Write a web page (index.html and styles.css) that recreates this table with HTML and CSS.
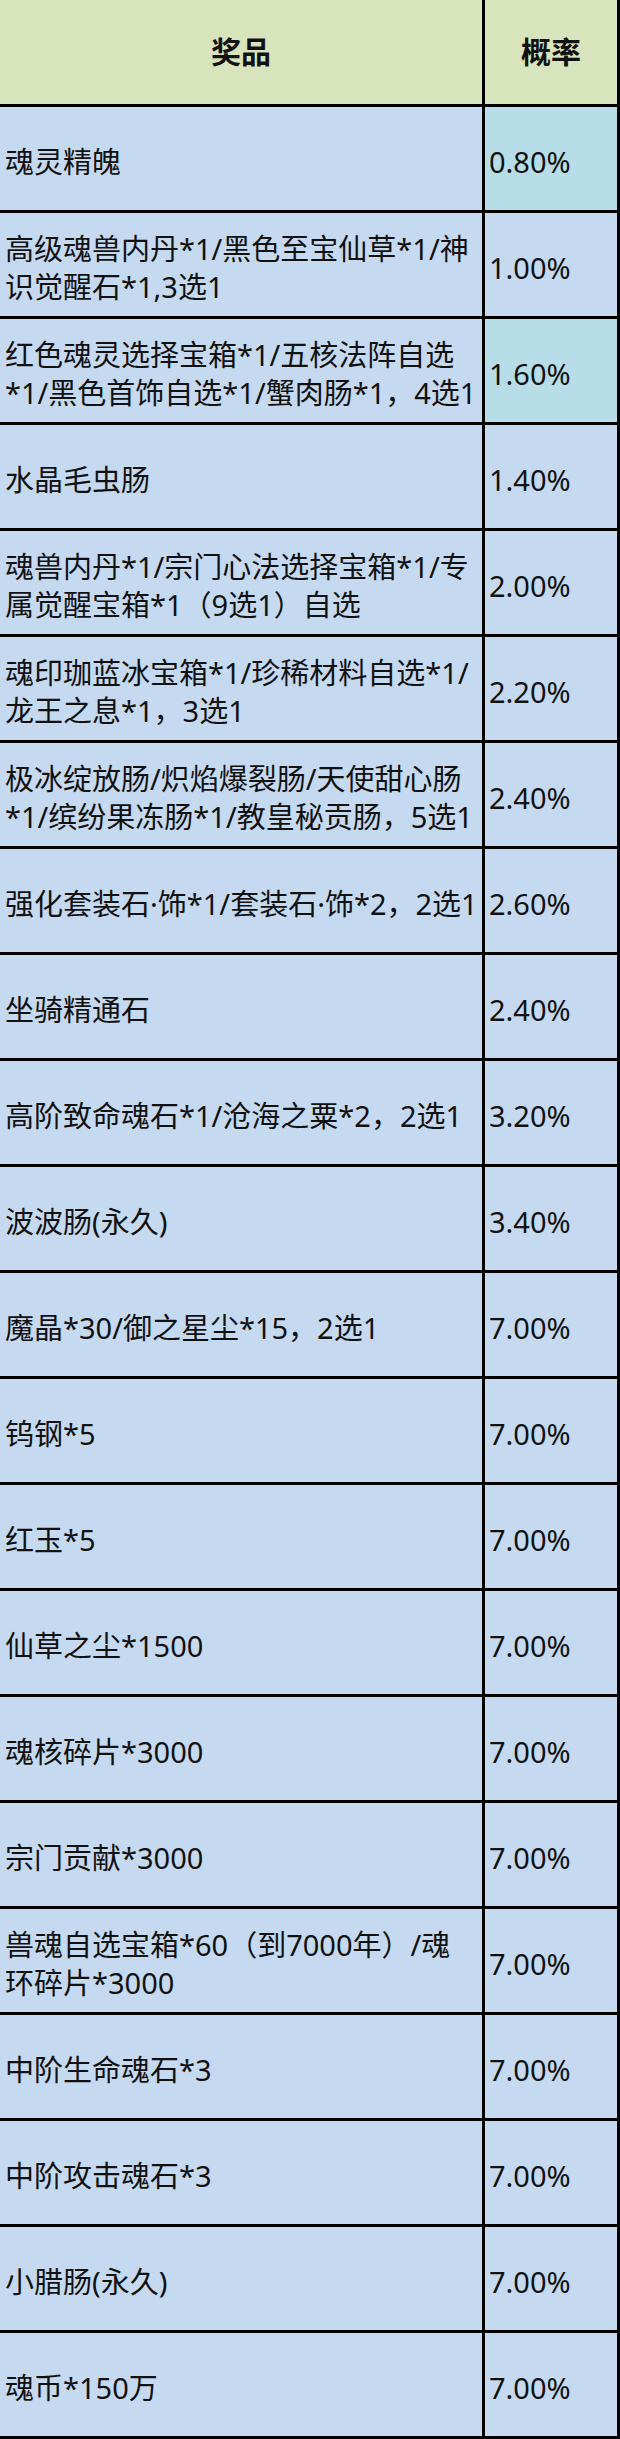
FILE: index.html
```html
<!DOCTYPE html>
<html lang="zh-CN">
<head>
<meta charset="utf-8">
<title>奖品概率</title>
<link rel="stylesheet" href="styles.css">
</head>
<body>
<div class="sheet">
  <div class="row head"><div class="cell name">奖品</div><div class="cell rate">概率</div></div>
  <div class="row"><div class="cell name">魂灵精魄</div><div class="cell rate hl">0.80%</div></div>
  <div class="row"><div class="cell name">高级魂兽内丹*1/黑色至宝仙草*1/神<br>识觉醒石*1,3选1</div><div class="cell rate">1.00%</div></div>
  <div class="row"><div class="cell name">红色魂灵选择宝箱*1/五核法阵自选<br>*1/黑色首饰自选*1/蟹肉肠*1，4选1</div><div class="cell rate hl">1.60%</div></div>
  <div class="row"><div class="cell name">水晶毛虫肠</div><div class="cell rate">1.40%</div></div>
  <div class="row"><div class="cell name">魂兽内丹*1/宗门心法选择宝箱*1/专<br>属觉醒宝箱*1（9选1）自选</div><div class="cell rate">2.00%</div></div>
  <div class="row"><div class="cell name">魂印珈蓝冰宝箱*1/珍稀材料自选*1/<br>龙王之息*1，3选1</div><div class="cell rate">2.20%</div></div>
  <div class="row"><div class="cell name">极冰绽放肠/炽焰爆裂肠/天使甜心肠<br>*1/缤纷果冻肠*1/教皇秘贡肠，5选1</div><div class="cell rate">2.40%</div></div>
  <div class="row"><div class="cell name">强化套装石·饰*1/套装石·饰*2，2选1</div><div class="cell rate">2.60%</div></div>
  <div class="row"><div class="cell name">坐骑精通石</div><div class="cell rate">2.40%</div></div>
  <div class="row"><div class="cell name">高阶致命魂石*1/沧海之粟*2，2选1</div><div class="cell rate">3.20%</div></div>
  <div class="row"><div class="cell name">波波肠(永久)</div><div class="cell rate">3.40%</div></div>
  <div class="row"><div class="cell name">魔晶*30/御之星尘*15，2选1</div><div class="cell rate">7.00%</div></div>
  <div class="row"><div class="cell name">钨钢*5</div><div class="cell rate">7.00%</div></div>
  <div class="row"><div class="cell name">红玉*5</div><div class="cell rate">7.00%</div></div>
  <div class="row"><div class="cell name">仙草之尘*1500</div><div class="cell rate">7.00%</div></div>
  <div class="row"><div class="cell name">魂核碎片*3000</div><div class="cell rate">7.00%</div></div>
  <div class="row"><div class="cell name">宗门贡献*3000</div><div class="cell rate">7.00%</div></div>
  <div class="row"><div class="cell name">兽魂自选宝箱*60（到7000年）/魂<br>环碎片*3000</div><div class="cell rate">7.00%</div></div>
  <div class="row"><div class="cell name">中阶生命魂石*3</div><div class="cell rate">7.00%</div></div>
  <div class="row"><div class="cell name">中阶攻击魂石*3</div><div class="cell rate">7.00%</div></div>
  <div class="row"><div class="cell name">小腊肠(永久)</div><div class="cell rate">7.00%</div></div>
  <div class="row"><div class="cell name">魂币*150万</div><div class="cell rate">7.00%</div></div>
</div>
</body>
</html>
```

FILE: styles.css
```css
html, body {
  margin: 0;
  padding: 0;
  background: #ffffff;
}

.sheet {
  width: 620px;
  font-family: "Noto Sans", "Noto Sans CJK SC", "DejaVu Sans", sans-serif;
  font-size: 29px;
  color: #111111;
}

.row {
  display: grid;
  grid-template-columns: 485px 135px;
  height: 106px;
  box-sizing: border-box;
  border-bottom: 3px solid #000000;
  background: #c5d9f1;
}

.row.head {
  height: 107px;
  background: #d8e4bc;
  font-weight: bold;
  font-size: 30px;
}

.cell {
  box-sizing: border-box;
  border-right: 3px solid #000000;
  display: flex;
  align-items: center;
  white-space: nowrap;
  overflow: hidden;
  line-height: 38px;
  padding-top: 6px;
}

.name {
  padding-left: 5px;
}

.rate {
  padding-left: 4px;
}

.head .cell {
  justify-content: center;
  padding-left: 0;
  padding-top: 0;
}

.rate.hl {
  background: #b7dee8;
}
```
